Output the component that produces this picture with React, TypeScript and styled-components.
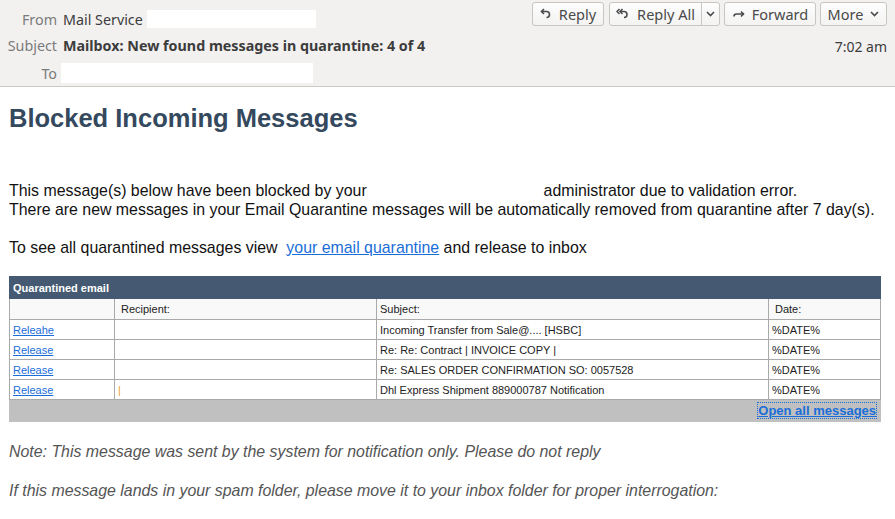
import styled, { createGlobalStyle } from "styled-components"

const Global = createGlobalStyle`
  html, body { margin: 0; padding: 0; background: #fff; }
  body { font-family: "Liberation Sans", Arial, sans-serif; }
`

const Page = styled.div`width: 895px; min-height: 519px; background: #fff;`

const Header = styled.div`
  display: flex; justify-content: space-between;
  height: 86px; background: #f2f1f0; border-bottom: 1px solid #cdc9c5;
  font-family: "Noto Sans", "DejaVu Sans", sans-serif; font-size: 14.3px; color: #3c3c3c;
`
const Fields = styled.div`
  display: grid; grid-template-columns: 57px auto; grid-template-rows: 26px 26px 30px;
  column-gap: 6px; padding-top: 6px; align-items: center;
`
const Label = styled.div`text-align: right; color: #7b7b7b;`
const Value = styled.div<{ $bold?: boolean }>`
  display: flex; align-items: center; gap: 4px;
  font-weight: ${p => (p.$bold ? 700 : 400)}; white-space: nowrap;
`
const Blank = styled.span<{ $w: number; $h: number; $shift?: number }>`
  display: inline-block; width: ${p => p.$w}px; height: ${p => p.$h}px; background: #fff;
  margin-left: ${p => p.$shift ?? 0}px;
`
const Side = styled.div`
  display: flex; flex-direction: column; align-items: flex-end;
  padding: 2px 8px 0 0; gap: 11px;
`
const Buttons = styled.div`display: flex; gap: 4px;`
const Btn = styled.div<{ $w: number }>`
  display: flex; align-items: center; justify-content: center; gap: 7px;
  width: ${p => p.$w}px; height: 24px; box-sizing: border-box;
  border: 1px solid #c9c5c1; border-radius: 3px;
  background: linear-gradient(#fdfdfd, #f4f3f2); color: #4a4a4a; font-size: 14.5px;
`
const Split = styled.div`
  display: flex; height: 24px; box-sizing: border-box; margin-left: 1px;
  border: 1px solid #c9c5c1; border-radius: 3px; background: linear-gradient(#fdfdfd, #f4f3f2);
`
const SplitMain = styled.div`
  display: flex; align-items: center; justify-content: center; gap: 7px;
  width: 91px; color: #4a4a4a; font-size: 14.5px; border-right: 1px solid #c9c5c1;
`
const SplitArrow = styled.div`display: flex; align-items: center; justify-content: center; width: 17px;`
const Time = styled.div`font-size: 14px; color: #3c3c3c;`

const Body = styled.div`padding: 0 9px; color: #111;`
const Title = styled.h1`
  margin: 0; padding-top: 16px; height: 94px; box-sizing: border-box;
  font-size: 25.5px; line-height: 30px; font-weight: 700; color: #34495e;
`
const Para = styled.div`font-size: 15.9px; line-height: 19px; color: #111;`
const Gap = styled.span<{ $w: number }>`display: inline-block; width: ${p => p.$w}px;`
const Link = styled.a`color: #1a6ed8; text-decoration: underline;`

const Table = styled.table`
  margin-top: 19px; width: 871px; border-collapse: collapse; table-layout: fixed;
  font-size: 11px; color: #222;
`
const Caption = styled.th`
  background: #455a72; color: #fff; font-weight: 700; text-align: left;
  height: 21px; padding: 0 3px; border: 1px solid #455a72;
`
const Head = styled.td<{ $pad?: number }>`
  background: #f9f9f9; height: 20px; padding: 0 ${p => p.$pad ?? 6}px; border: 1px solid #aaa;
`
const Cell = styled.td`
  height: 19px; padding: 0 3px; border: 1px solid #aaa; white-space: nowrap; overflow: hidden;
`
const SmallLink = styled.a`color: #1a6ed8; text-decoration: underline;`
const Mark = styled.span`color: #f0a030;`
const Foot = styled.td`
  background: #c0c0c0; height: 21px; padding: 0 4px; text-align: right; border: 1px solid #c0c0c0;
`
const OpenAll = styled.a`
  color: #1a6ed8; font-weight: 700; font-size: 13px; text-decoration: underline;
  outline: 1px dotted #1a6ed8;
`
const Note = styled.div`
  margin-top: 20px; font-size: 15.9px; line-height: 19.5px; font-style: italic; color: #555;
`

const ReplyIcon = () => (
  <svg width="12" height="12" viewBox="0 0 12 12" fill="none" stroke="#4a4a4a" strokeWidth="1.6">
    <path d="M4 1 1.5 3.5 4 6" />
    <path d="M1.5 3.5h5a3 3 0 0 1 3 3v0a3 3 0 0 1-3 3" />
  </svg>
)
const ReplyAllIcon = () => (
  <svg width="14" height="12" viewBox="0 0 14 12" fill="none" stroke="#4a4a4a" strokeWidth="1.5">
    <path d="M3.5 1 1 3.5 3.5 6" />
    <path d="M6.5 1 4 3.5 6.5 6" />
    <path d="M4 3.5h4a3 3 0 0 1 3 3v0a3 3 0 0 1-3 3" />
  </svg>
)
const ForwardIcon = () => (
  <svg width="13" height="12" viewBox="0 0 13 12" fill="none" stroke="#4a4a4a" strokeWidth="1.6">
    <path d="M9 3.5 11.5 6 9 8.5" />
    <path d="M11.5 6h-7a2.5 2.5 0 0 0-2.5 2.5" />
  </svg>
)
const Chevron = () => (
  <svg width="9" height="6" viewBox="0 0 9 6" fill="none" stroke="#4a4a4a" strokeWidth="1.6">
    <path d="M1 1l3.5 3.5L8 1" />
  </svg>
)

const rows = [
  { act: "Releahe", mark: false, subject: "Incoming Transfer from Sale@.... [HSBC]" },
  { act: "Release", mark: false, subject: "Re: Re: Contract | INVOICE COPY  |" },
  { act: "Release", mark: false, subject: "Re: SALES ORDER CONFIRMATION SO: 0057528" },
  { act: "Release", mark: true, subject: "Dhl Express Shipment 889000787 Notification" },
]

export default function App() {
  return (
    <Page>
      <Global />
      <Header>
        <Fields>
          <Label>From</Label>
          <Value>Mail Service <Blank $w={169} $h={18} /></Value>
          <Label>Subject</Label>
          <Value $bold>Mailbox: New found messages in quarantine: 4 of 4</Value>
          <Label>To</Label>
          <Value><Blank $w={252} $h={20} $shift={-2} /></Value>
        </Fields>
        <Side>
          <Buttons>
            <Btn $w={72}><ReplyIcon />Reply</Btn>
            <Split>
              <SplitMain><ReplyAllIcon />Reply All</SplitMain>
              <SplitArrow><Chevron /></SplitArrow>
            </Split>
            <Btn $w={92}><ForwardIcon />Forward</Btn>
            <Btn $w={67}>More <Chevron /></Btn>
          </Buttons>
          <Time>7:02 am</Time>
        </Side>
      </Header>
      <Body>
        <Title>Blocked Incoming Messages</Title>
        <Para>
          This message(s) below have been blocked by your <Gap $w={168} /> administrator due to validation error.<br />
          There are new messages in your Email Quarantine messages will be automatically removed from quarantine after 7 day(s).<br />
          <br />
          To see all quarantined messages view&nbsp; <Link href="#">your email quarantine</Link> and release to inbox
        </Para>
        <Table>
          <colgroup>
            <col style={{ width: 105 }} />
            <col style={{ width: 262 }} />
            <col style={{ width: 392 }} />
            <col style={{ width: 112 }} />
          </colgroup>
          <thead>
            <tr><Caption colSpan={4}>Quarantined email</Caption></tr>
          </thead>
          <tbody>
            <tr>
              <Head />
              <Head>Recipient:</Head>
              <Head $pad={3}>Subject:</Head>
              <Head>Date:</Head>
            </tr>
            {rows.map((r, i) => (
              <tr key={i}>
                <Cell><SmallLink href="#">{r.act}</SmallLink></Cell>
                <Cell>{r.mark && <Mark>|</Mark>}</Cell>
                <Cell>{r.subject}</Cell>
                <Cell>%DATE%</Cell>
              </tr>
            ))}
            <tr><Foot colSpan={4}><OpenAll href="#">Open all messages</OpenAll></Foot></tr>
          </tbody>
        </Table>
        <Note>
          Note: This message was sent by the system for notification only. Please do not reply<br />
          <br />
          If this message lands in your spam folder, please move it to your inbox folder for proper interrogation:
        </Note>
      </Body>
    </Page>
  )
}
